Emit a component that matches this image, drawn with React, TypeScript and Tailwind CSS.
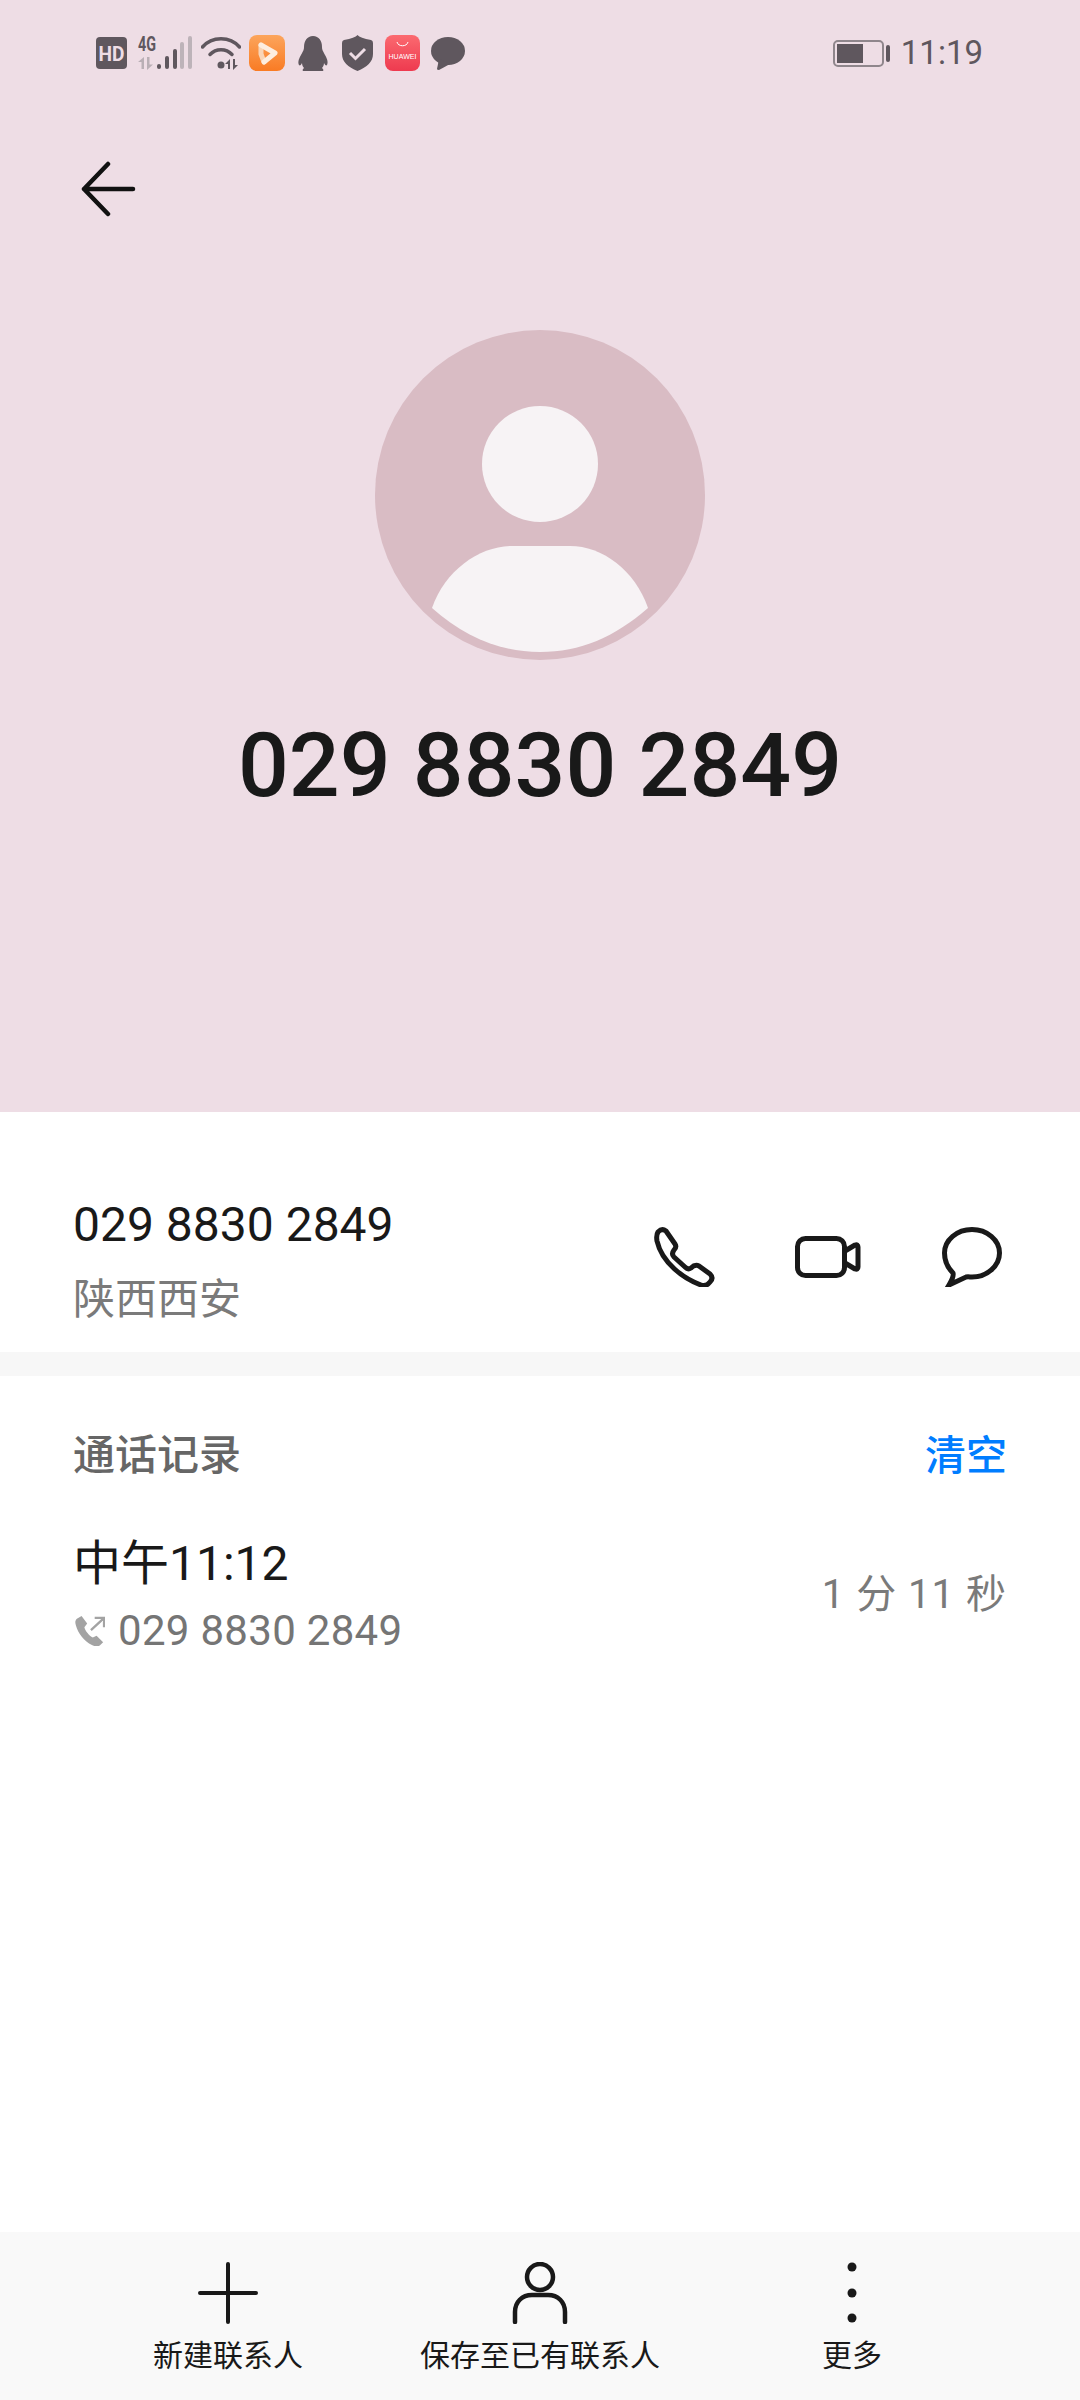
import React from "react";

const INK = "#191919";
const STATUS = "#5f575e";

function HdBadge() {
  return (
    <svg width="31" height="32" viewBox="0 0 31 32" className="block overflow-visible">
      <rect width="31" height="32" rx="4" fill={STATUS} />
      <text x="15.500" y="23.500" textAnchor="middle" fontFamily="Roboto, sans-serif" fontWeight="700" fontSize="21" fill="#eedde5" textLength="26" lengthAdjust="spacingAndGlyphs">HD</text>
    </svg>
  );
}

function CellSignal() {
  return (
    <svg width="54" height="34" viewBox="0 0 54 34" className="block overflow-visible">
      <text x="0" y="15" fontFamily="Roboto, sans-serif" fontWeight="700" fontSize="20" fill={STATUS} textLength="18" lengthAdjust="spacingAndGlyphs">4G</text>
      <path d="M6 21v12H3.500v-7H0zM9 21h2.500v7.500H15L9 34z" fill="#b9afb5" />
      <rect x="19" y="28" width="4" height="5" rx="2" fill={STATUS} />
      <rect x="27" y="20" width="4" height="13" rx="2" fill={STATUS} />
      <rect x="35" y="13" width="4" height="20" rx="2" fill={STATUS} />
      <rect x="42" y="6" width="4" height="27" rx="2" fill="#bdb3b9" />
      <rect x="50" y="0" width="4" height="33" rx="2" fill="#bdb3b9" />
    </svg>
  );
}

function Wifi() {
  return (
    <svg width="40" height="34" viewBox="0 0 40 34" className="block" fill="none" stroke={STATUS} strokeLinecap="round">
      <path d="M1.500 11C11 0 29 0 38.500 11" strokeWidth="3.500" />
      <path d="M9 18.500C15 12 25 12 31 18.500" strokeWidth="3.500" />
      <circle cx="20" cy="29" r="3.500" fill={STATUS} stroke="none" />
      <path d="M29 23v10h-2v-5h-3zM32 23h2v6h3l-5 5z" fill={STATUS} stroke="none" />
    </svg>
  );
}

function VideoApp() {
  return (
    <svg width="36" height="36" viewBox="0 0 36 36" className="block">
      <defs>
        <linearGradient id="video-app" x1="0" y1="0" x2="0" y2="1">
          <stop offset="0" stopColor="#fca55c" />
          <stop offset="1" stopColor="#f97b24" />
        </linearGradient>
      </defs>
      <rect width="36" height="36" rx="8" fill="url(#video-app)" />
      <path d="M12 10V19M12 19L15 27" fill="none" stroke="#f9d5b7" strokeWidth="5" strokeLinecap="round" />
      <path d="M12 10L26 18L15 27" fill="none" stroke="#fdeee0" strokeWidth="5" strokeLinecap="round" strokeLinejoin="round" />
    </svg>
  );
}

function Penguin() {
  return (
    <svg width="30" height="35" viewBox="0 0 30 35" className="block" fill={STATUS}>
      <path d="M15 0c6 0 9 5 9 11 0 3 1 4 3 8 3 5 3 8 2 10-1 1-2 0-3-2 0 2-1 4-2 5 1 1 2 2 1 3H5c-1-1 0-2 1-3-1-1-2-3-2-5-1 2-2 3-3 2-1-2-1-5 2-10 2-4 3-5 3-8C6 5 9 0 15 0z" />
    </svg>
  );
}

function ShieldCheck() {
  return (
    <svg width="31" height="36" viewBox="0 0 31 36" className="block">
      <path d="M15.500 0Q18 3 29 5Q31 5.500 31 8V19C31 27 25 32 15.500 36C6 32 0 27 0 19V8Q0 5.500 2 5Q13 3 15.500 0Z" fill={STATUS} />
      <path d="M8 18l5.500 5.500L23 14" fill="none" stroke="#eedde5" strokeWidth="3" />
    </svg>
  );
}

function HuaweiApp() {
  return (
    <svg width="35" height="36" viewBox="0 0 35 36" className="block">
      <defs>
        <linearGradient id="huawei-app" x1="0" y1="0" x2="0" y2="1">
          <stop offset="0" stopColor="#fb6a70" />
          <stop offset="1" stopColor="#ee3a4f" />
        </linearGradient>
      </defs>
      <rect width="35" height="36" rx="8" fill="url(#huawei-app)" />
      <path d="M12 7c1 5 10 5 11 0" fill="none" stroke="#fff" strokeWidth="1" />
      <text x="17.500" y="24" textAnchor="middle" fontFamily="Liberation Sans, sans-serif" fontSize="6.500" fill="#fff" textLength="28" lengthAdjust="spacingAndGlyphs">HUAWEI</text>
    </svg>
  );
}

function ChatBubble() {
  return (
    <svg width="34" height="33" viewBox="0 0 34 33" className="block" fill={STATUS}>
      <ellipse cx="17" cy="14" rx="17" ry="14" />
      <path d="M8 22L6 32Q6 33 8 33L19 27z" />
    </svg>
  );
}

function Battery() {
  return (
    <svg width="57" height="27" viewBox="0 0 57 27" className="block">
      <rect x="1" y="1" width="49" height="25" rx="4" fill="none" stroke="#8f868c" strokeWidth="2" />
      <rect x="4" y="4" width="26" height="19" fill={STATUS} />
      <rect x="53" y="5" width="4" height="17" rx="2" fill={STATUS} />
    </svg>
  );
}

function PhoneIcon() {
  return (
    <svg width="61" height="60" viewBox="0 0 61 60" className="block" fill="none" stroke={INK} strokeWidth="5" strokeLinejoin="round">
      <path d="M4 5Q8 1 12 4L21 17Q23 20 20 23Q17 27 20 30L31 40Q34 43 37 41Q41 37 45 39L56 47Q60 51 56 55Q52 60 47 58C30 52 8 36 3 14Q2 8 4 5Z" />
    </svg>
  );
}

function VideoIcon() {
  return (
    <svg width="66" height="42" viewBox="0 0 66 42" className="block" fill="none" stroke={INK} strokeWidth="5" strokeLinejoin="round">
      <rect x="2.500" y="2.500" width="47" height="37" rx="8" />
      <path d="M50 15L60 9Q63 8 63 11V31Q63 34 60 33L50 27" />
    </svg>
  );
}

function MessageIcon() {
  return (
    <svg width="60" height="60" viewBox="0 0 60 60" className="block" fill="none" stroke={INK} strokeWidth="5">
      <path d="M30 2.500C45 2.500 57.500 13 57.500 26C57.500 39 45 50 30 50C28 50 26 49.500 24 50L7 58C10 53 12 49 11 46C6 41 2.500 35 2.500 26C2.500 13 15 2.500 30 2.500Z" strokeLinejoin="miter" />
    </svg>
  );
}

function OutgoingCall() {
  return (
    <svg width="30" height="30" viewBox="0 0 32 32" className="block" fill="#a3a3a3">
      <path d="M2 3l5-3 6 8-3 4c1 4 5 9 9 11l4-2 7 7-3 3c-2 2-5 2-9 0C10 27 3 18 1 10 0 7 0 5 2 3z" />
      <path d="M17 15L30 3M21 2h10v10" fill="none" stroke="#a3a3a3" strokeWidth="2.500" />
    </svg>
  );
}

function PlusIcon() {
  return (
    <svg width="60" height="62" viewBox="0 0 60 62" className="block" fill="none" stroke={INK} strokeWidth="4" strokeLinecap="round">
      <path d="M30 2V60M2 31H58" />
    </svg>
  );
}

function PersonIcon() {
  return (
    <svg width="56" height="62" viewBox="0 0 56 62" className="block" fill="none" stroke={INK} strokeWidth="4.500" strokeLinecap="round">
      <circle cx="28" cy="15" r="13" />
      <path d="M3 60V50C3 40 10 33 20 33H36C46 33 53 40 53 50V60" />
    </svg>
  );
}

function DotsIcon() {
  return (
    <svg width="60" height="62" viewBox="0 0 60 62" className="block" fill={INK}>
      <circle cx="30" cy="5" r="4.500" />
      <circle cx="30" cy="31" r="4.500" />
      <circle cx="30" cy="56" r="4.500" />
    </svg>
  );
}

function ToolbarAction({ icon, label }: { icon: React.ReactNode; label: string }) {
  return (
    <div className="flex flex-col items-center">
      {icon}
      <span className="mt-[14px] text-[30px] leading-[36px] text-[#191919] whitespace-nowrap">{label}</span>
    </div>
  );
}

export default function App() {
  return (
    <div
      className="w-[1080px] h-[2400px] flex flex-col bg-white overflow-hidden"
      style={{ fontFamily: 'Roboto, "Noto Sans CJK SC", sans-serif' }}
    >
      <header className="h-[1112px] bg-[#eedde5] flex flex-col">
        <div className="h-[104px] pt-[35px] pl-[96px] pr-[97px] flex items-start justify-between">
          <div className="flex items-center h-[36px]">
            <HdBadge />
            <div className="ml-[11px]"><CellSignal /></div>
            <div className="ml-[9px]"><Wifi /></div>
            <div className="ml-[8px]"><VideoApp /></div>
            <div className="ml-[13px]"><Penguin /></div>
            <div className="ml-[14px]"><ShieldCheck /></div>
            <div className="ml-[12px]"><HuaweiApp /></div>
            <div className="ml-[11px]"><ChatBubble /></div>
          </div>
          <div className="flex items-center gap-[11px] h-[36px] text-[33px] text-[#5f575e]">
            <Battery />
            <span>11:19</span>
          </div>
        </div>

        <div className="pl-[80px] pt-[57px]">
          <svg width="56" height="56" viewBox="0 0 56 56" className="block" fill="none" stroke="#111" strokeWidth="4.500" strokeLinecap="round" strokeLinejoin="round">
            <path d="M53 28H4M28 3L4 28L28 53" />
          </svg>
        </div>

        <div className="mt-[113px] mx-auto w-[330px] h-[330px] rounded-full bg-[#d9bcc4]">
          <svg width="330" height="330" viewBox="0 0 330 330" className="block" fill="#f7f3f5">
            <circle cx="165" cy="134" r="58" />
            <path d="M57 278C70 240 105 216 137 216H195C227 216 260 240 273 278C240 307 205 322 165 322C125 322 90 307 57 278Z" />
          </svg>
        </div>

        <h1 className="mt-[56px] text-center text-[89.5px] leading-[100px] font-medium text-[#191919]">029 8830 2849</h1>
      </header>

      <section className="h-[240px] pl-[73px] pr-[78px] flex items-start justify-between">
        <div className="pt-[83px] flex flex-col">
          <span className="text-[48px] leading-[60px] text-[#191919]">029 8830 2849</span>
          <span className="mt-[17px] text-[42px] leading-[56px] text-[#7a7a7a]">陕西西安</span>
        </div>
        <div className="mt-[115px] flex items-center">
          <PhoneIcon />
          <div className="ml-[80px]"><VideoIcon /></div>
          <div className="ml-[81px]"><MessageIcon /></div>
        </div>
      </section>

      <div className="h-[24px] bg-[#f7f7f7]" />

      <section className="px-[73px] flex-1 flex flex-col">
        <div className="mt-[52px] flex items-center justify-between">
          <span className="text-[42px] leading-[56px] font-medium text-[#666666]">通话记录</span>
          <span className="text-[41px] leading-[56px] font-medium text-[#007dff]">清空</span>
        </div>
        <div className="mt-[48px] flex items-center justify-between">
          <div className="flex flex-col">
            <span className="text-[48px] leading-[64px] text-[#191919]">中午11:12</span>
            <div className="mt-[9px] flex items-center gap-[13px] pl-[2px]">
              <OutgoingCall />
              <span className="text-[42px] leading-[52px] tracking-[0.3px] text-[#757575]">029 8830 2849</span>
            </div>
          </div>
          <span className="text-[40px] leading-[52px] tracking-[1px] text-[#7a7a7a]">1 分 11 秒</span>
        </div>
      </section>

      <footer className="h-[168px] bg-[#f9f9f9] px-[72px] pt-[30px] grid grid-cols-3">
        <ToolbarAction icon={<PlusIcon />} label="新建联系人" />
        <ToolbarAction icon={<PersonIcon />} label="保存至已有联系人" />
        <ToolbarAction icon={<DotsIcon />} label="更多" />
      </footer>
    </div>
  );
}
